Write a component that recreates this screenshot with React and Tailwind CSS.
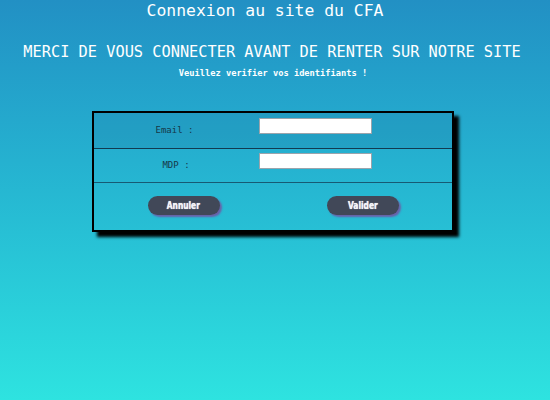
import React from 'react';

const mono = { fontFamily: '"DejaVu Sans Mono", "Liberation Mono", monospace' };

function PillButton({ children }) {
  return (
    <button
      className="w-[72px] h-[19px] rounded-full bg-[#414858] text-[#f4f4f8] text-[11px] font-bold leading-none shadow-[2px_2px_2px_#6a5fa8] flex items-center justify-center"
      style={{ fontFamily: '"DejaVu Sans", "Liberation Sans", sans-serif', textShadow: '0 0 1px #ffffff' }}
    >
      <span className="inline-block scale-x-[0.68]">{children}</span>
    </button>
  );
}

export default function App() {
  return (
    <div className="w-[550px] h-[400px] overflow-hidden bg-gradient-to-b from-[#2290c4] to-[#2ee3e0] text-white flex flex-col items-center" style={mono}>
      {/* Headings */}
      <h1 className="mr-[20px] text-[16.4px] leading-[22px]">Connexion au site du CFA</h1>
      <h2 className="mr-[6px] text-[15.3px] leading-[20px] mt-[20px] whitespace-nowrap">MERCI DE VOUS CONNECTER AVANT DE RENTER SUR NOTRE SITE</h2>
      <p className="mr-[4px] text-[8.7px] font-bold leading-[12px] mt-[5px]">Veuillez verifier vos identifiants !</p>

      {/* Login box */}
      <div className="mt-[32px] ml-[-4px] w-[362px] border-2 border-black shadow-[5px_5px_3px_#000000]">
        <div className="h-[36px] flex items-start bg-[#1c6f9c]/20 border-b border-[#123a50]">
          <div className="w-[161px] self-center text-center text-[9px] text-[#163848]">Email :</div>
          <input className="ml-[4px] mt-[5px] w-[113px] h-[16px] bg-white border border-[#9aa4ac] outline-none" />
        </div>
        <div className="h-[34px] flex items-start border-b border-[#175a74]">
          <div className="w-[164px] self-center text-center text-[9px] text-[#163848]">MDP :</div>
          <input className="ml-[1px] mt-[4px] w-[113px] h-[16px] bg-white border border-[#9aa4ac] outline-none" />
        </div>
        <div className="h-[47px] grid grid-cols-2 items-start pt-[13px]">
          <div className="flex justify-center"><PillButton>Annuler</PillButton></div>
          <div className="flex justify-center"><PillButton>Valider</PillButton></div>
        </div>
      </div>
    </div>
  );
}
